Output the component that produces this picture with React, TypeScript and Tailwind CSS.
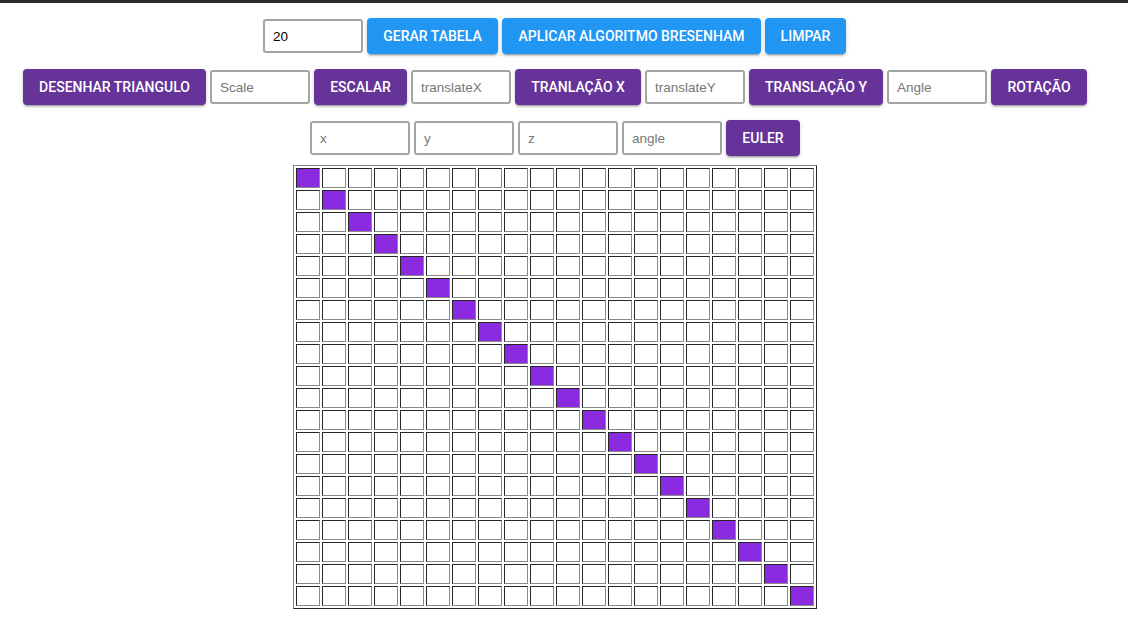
import { useState } from "react";

// ===============================Helpers==============================
const SIZE = 20;

const btnBase =
  "h-[36px] shrink-0 rounded-[4px] text-white text-[14px] font-medium uppercase tracking-normal leading-[1.75] font-['Roboto',sans-serif] shadow-[0px_3px_1px_-2px_rgba(0,0,0,0.2),0px_2px_2px_0px_rgba(0,0,0,0.14),0px_1px_5px_0px_rgba(0,0,0,0.12)]";
const blueBtn = `${btnBase} bg-[#2196f3]`;
const purpleBtn = `${btnBase} bg-[#663399]`;
const inputCls =
  "w-[100px] h-[34px] shrink-0 rounded-[3px] border-2 border-[#a4a4a4] bg-white pl-[8px] text-[13.5px] text-black font-['Liberation_Sans',Arial,sans-serif] placeholder:text-[#777] outline-none";

// ===============================Component==============================
const App = () => {
  const [size, setSize] = useState("20");
  const n = Number(size) || SIZE;

  const rows = Array.from({ length: n }, (_, i) => i);

  return (
    <div className="min-h-screen bg-white border-t-[3px] border-[#2b2b2b]">
      <div className="flex flex-col items-center pr-[18px]">
        {/* ===============================Row 1============================== */}
        <div className="mt-[15px] mr-[1px] flex items-center gap-[4px]">
          <input
            className={inputCls}
            value={size}
            onChange={(e) => setSize(e.target.value)}
          />
          <button className={`${blueBtn} w-[131px]`}>Gerar Tabela</button>
          <button className={`${blueBtn} w-[259px]`}>
            Aplicar Algoritmo Bresenham
          </button>
          <button className={`${blueBtn} w-[81px]`}>Limpar</button>
        </div>

        {/* ===============================Row 2============================== */}
        <div className="mt-[15px] flex items-center gap-[4px]">
          <button className={`${purpleBtn} w-[183px]`}>Desenhar Triangulo</button>
          <input className={inputCls} placeholder="Scale" />
          <button className={`${purpleBtn} w-[93px]`}>Escalar</button>
          <input className={inputCls} placeholder="translateX" />
          <button className={`${purpleBtn} w-[126px]`}>Tranlação X</button>
          <input className={inputCls} placeholder="translateY" />
          <button className={`${purpleBtn} w-[134px]`}>Translação Y</button>
          <input className={inputCls} placeholder="Angle" />
          <button className={`${purpleBtn} w-[96px]`}>Rotação</button>
        </div>

        {/* ===============================Row 3============================== */}
        <div className="mt-[15px] flex items-center gap-[4px]">
          <input className={inputCls} placeholder="x" />
          <input className={inputCls} placeholder="y" />
          <input className={inputCls} placeholder="z" />
          <input className={inputCls} placeholder="angle" />
          <button className={`${purpleBtn} w-[74px]`}>Euler</button>
        </div>

        {/* ===============================Grid============================== */}
        <table className="mt-[9px] border-separate border-spacing-[2px] border border-t-[#8a8a8a] border-l-[#8a8a8a] border-r-[#262626] border-b-[#262626]">
          <tbody>
            {rows.map((r) => (
              <tr key={r}>
                {rows.map((c) => (
                  <td
                    key={c}
                    className={`w-[24px] h-[20px] p-0 border border-t-[#262626] border-l-[#262626] border-r-[#8a8a8a] border-b-[#8a8a8a] ${
                      r === c ? "bg-[#8a2be2]" : "bg-white"
                    }`}
                  />
                ))}
              </tr>
            ))}
          </tbody>
        </table>
      </div>
    </div>
  );
};

export default App;
